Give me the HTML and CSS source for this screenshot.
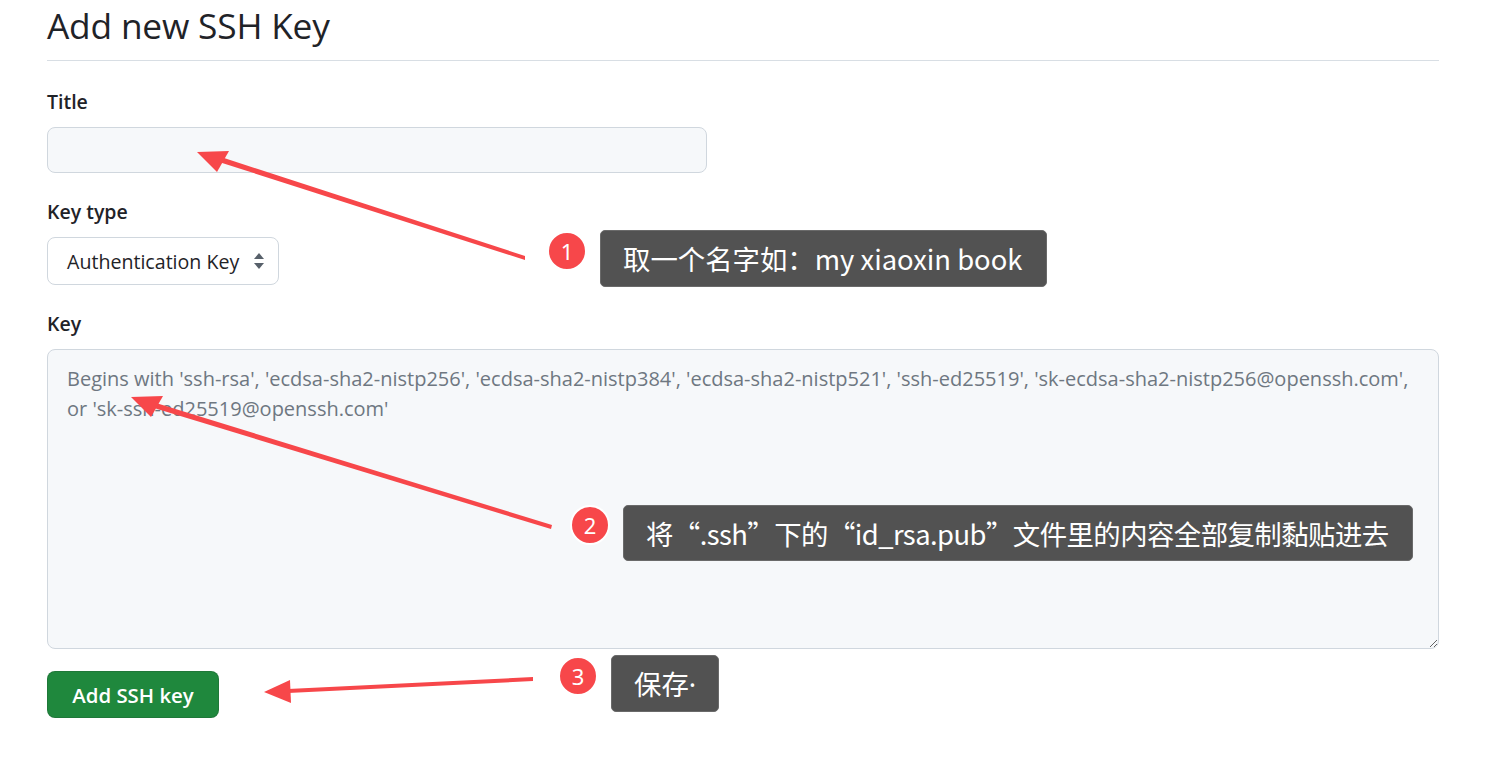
FILE: index.html
```html
<!DOCTYPE html>
<html lang="zh-CN">
<head>
<meta charset="utf-8">
<title>Add new SSH Key</title>
<link rel="stylesheet" href="styles.css">
</head>
<body>
<div class="page">
  <h1 class="heading">Add new SSH Key</h1>
  <form class="form">
    <div class="field">
      <label class="label">Title</label>
      <input class="input title-input" type="text">
    </div>
    <div class="field">
      <label class="label">Key type</label>
      <div class="select">
        <span class="select-text">Authentication Key</span>
        <svg class="select-icon" width="12" height="18" viewBox="0 0 12 18"><path d="M6 1 L11 7 H1 Z" fill="#57606a"/><path d="M6 17 L11 11 H1 Z" fill="#57606a"/></svg>
      </div>
    </div>
    <div class="field field-key">
      <label class="label">Key</label>
      <textarea class="input textarea" placeholder="Begins with 'ssh-rsa', 'ecdsa-sha2-nistp256', 'ecdsa-sha2-nistp384', 'ecdsa-sha2-nistp521', 'ssh-ed25519', 'sk-ecdsa-sha2-nistp256@openssh.com',&#10;or 'sk-ssh-ed25519@openssh.com'"></textarea>
    </div>
    <button class="btn" type="button">Add SSH key</button>
  </form>
</div>

<svg class="arrows" width="1490" height="761" viewBox="0 0 1490 761">
  <g fill="#f7474a">
    <polygon points="525,256 525,260 219,162 221,157"/>
    <polygon points="197,152 229,151 217,172"/>
    <polygon points="552,525 551,529 154,408 156,403"/>
    <polygon points="131,397 163,396 151,417"/>
    <polygon points="533,677 533,681 288,693 288,689"/>
    <polygon points="264,692 290,680 291,703"/>
  </g>
</svg>

<div class="badge badge-1">1</div>
<div class="note note-1">取一个名字如：my xiaoxin book</div>
<div class="badge badge-2">2</div>
<div class="note note-2">将“.ssh”下的“id_rsa.pub”文件里的内容全部复制黏贴进去</div>
<div class="badge badge-3">3</div>
<div class="note note-3">保存<span class="dot">·</span></div>
</body>
</html>
```
FILE: styles.css
```css
html, body {
  margin: 0;
  padding: 0;
  background: #ffffff;
}
body {
  font-family: "Open Sans", "Noto Sans", "Noto Sans CJK SC", sans-serif;
  color: #1f2328;
  width: 1490px;
  height: 761px;
  overflow: hidden;
  position: relative;
}
.page {
  padding: 0 51px 0 47px;
}
.heading {
  margin: 0;
  padding-top: 2px;
  font-size: 35.3px;
  font-weight: 400;
  line-height: 46px;
  height: 58px;
  border-bottom: 1px solid #d8dee4;
  letter-spacing: -0.2px;
}
.form {
  display: flex;
  flex-direction: column;
  padding-top: 28px;
}
.field {
  display: flex;
  flex-direction: column;
  margin-bottom: 26px;
}
.field-key {
  margin-bottom: 22px;
}
.label {
  font-size: 19.5px;
  font-weight: 600;
  line-height: 26px;
  margin-bottom: 12px;
}
.input {
  box-sizing: border-box;
  background: #f6f8fa;
  border: 1px solid #d0d7de;
  border-radius: 8px;
  font-family: inherit;
  outline: none;
}
.title-input {
  width: 660px;
  height: 46px;
}
.select {
  box-sizing: border-box;
  width: 232px;
  height: 48px;
  border: 1px solid #d0d7de;
  border-radius: 8px;
  display: flex;
  align-items: center;
  justify-content: space-between;
  padding: 0 13px 0 19px;
  background: #ffffff;
}
.select-text {
  font-size: 19.6px;
  color: #1f2328;
}
.textarea {
  width: 1392px;
  height: 300px;
  padding: 14px 6px 14px 19px;
  font-size: 20px;
  line-height: 30px;
  resize: vertical;
  color: #1f2328;
}
.textarea::placeholder {
  color: #6e7781;
}
.btn {
  align-self: flex-start;
  width: 172px;
  height: 47px;
  background: #1f883d;
  color: #ffffff;
  border: 1px solid rgba(31, 35, 40, 0.15);
  border-radius: 8px;
  font-family: inherit;
  font-size: 20.4px;
  font-weight: 600;
  padding: 0;
}
.arrows {
  position: absolute;
  left: 0;
  top: 0;
  pointer-events: none;
}
.badge {
  position: absolute;
  width: 36px;
  height: 36px;
  border-radius: 50%;
  background: #f7474a;
  border: 2px solid #ffffff;
  color: #ffffff;
  font-family: "Noto Sans", sans-serif;
  font-size: 22px;
  line-height: 36px;
  text-align: center;
}
.badge-1 { left: 547px; top: 231px; }
.badge-2 { left: 570px; top: 505px; }
.badge-3 { left: 558px; top: 656px; }
.note {
  position: absolute;
  box-sizing: border-box;
  background: #525252;
  border: 1px solid #6a6a6a;
  border-radius: 5px;
  color: #ffffff;
  font-family: "Noto Sans CJK SC", "Noto Sans", sans-serif;
  font-size: 27.4px;
  line-height: 55px;
  padding: 0 22px;
  white-space: nowrap;
}
.dot {
  font-family: "Noto Sans", sans-serif;
}
.note-1 { left: 600px; top: 230px; width: 447px; height: 57px; }
.note-2 { left: 623px; top: 505px; width: 790px; height: 56px; letter-spacing: -0.55px; }
.note-3 { left: 611px; top: 655px; width: 108px; height: 57px; }
```
